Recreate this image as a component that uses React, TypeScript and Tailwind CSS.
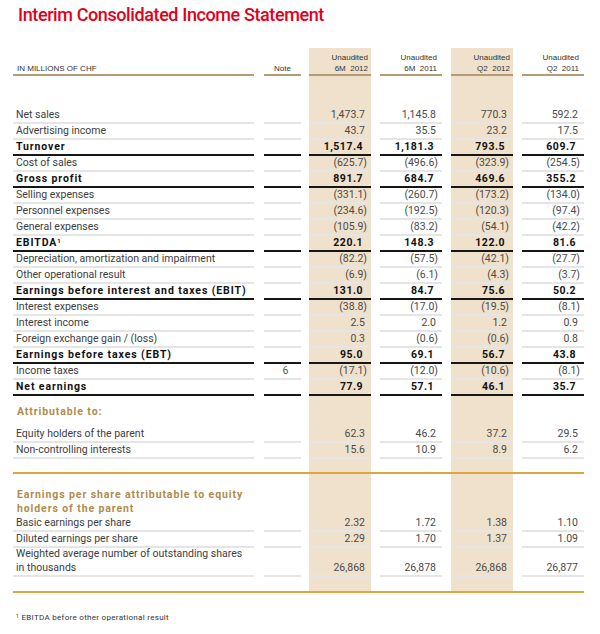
const band = 'bg-[#f0e1cc]'

type Kind = 'normal' | 'bold'

const rows: [string, string, string[], Kind][] = [
  ['Net sales', '', ['1,473.7', '1,145.8', '770.3', '592.2'], 'normal'],
  ['Advertising income', '', ['43.7', '35.5', '23.2', '17.5'], 'normal'],
  ['Turnover', '', ['1,517.4', '1,181.3', '793.5', '609.7'], 'bold'],
  ['Cost of sales', '', ['(625.7)', '(496.6)', '(323.9)', '(254.5)'], 'normal'],
  ['Gross profit', '', ['891.7', '684.7', '469.6', '355.2'], 'bold'],
  ['Selling expenses', '', ['(331.1)', '(260.7)', '(173.2)', '(134.0)'], 'normal'],
  ['Personnel expenses', '', ['(234.6)', '(192.5)', '(120.3)', '(97.4)'], 'normal'],
  ['General expenses', '', ['(105.9)', '(83.2)', '(54.1)', '(42.2)'], 'normal'],
  ['EBITDA', '', ['220.1', '148.3', '122.0', '81.6'], 'bold'],
  ['Depreciation, amortization and impairment', '', ['(82.2)', '(57.5)', '(42.1)', '(27.7)'], 'normal'],
  ['Other operational result', '', ['(6.9)', '(6.1)', '(4.3)', '(3.7)'], 'normal'],
  ['Earnings before interest and taxes (EBIT)', '', ['131.0', '84.7', '75.6', '50.2'], 'bold'],
  ['Interest expenses', '', ['(38.8)', '(17.0)', '(19.5)', '(8.1)'], 'normal'],
  ['Interest income', '', ['2.5', '2.0', '1.2', '0.9'], 'normal'],
  ['Foreign exchange gain / (loss)', '', ['0.3', '(0.6)', '(0.6)', '0.8'], 'normal'],
  ['Earnings before taxes (EBT)', '', ['95.0', '69.1', '56.7', '43.8'], 'bold'],
  ['Income taxes', '6', ['(17.1)', '(12.0)', '(10.6)', '(8.1)'], 'normal'],
  ['Net earnings', '', ['77.9', '57.1', '46.1', '35.7'], 'bold'],
]

const widths = ['w-[241px]', 'w-[37px]', 'w-[62px]', 'w-[62px]', 'w-[62px]', 'w-[62px]']
const gaps = ['', 'ml-[10px]', 'ml-[8px]', 'ml-[9px]', 'ml-[9px]', 'ml-[9px]']
const justify = ['justify-start pl-[3px]', 'justify-center', 'justify-end', 'justify-end', 'justify-end', 'justify-end']

// one row of the six columns; line is the colour class of the rule under each cell
function Skeleton({
  cells,
  line,
  h,
  align = 'items-center',
}: {
  cells: React.ReactNode[]
  line?: string
  h: string
  align?: string
}) {
  return (
    <div className="flex">
      {cells.map((c, i) => (
        <div key={i} className={`${widths[i]} ${gaps[i]} ${i === 2 || i === 4 ? band : ''} flex flex-col`}>
          <div className={`${h} flex ${align} ${justify[i]}`}>{c}</div>
          {line && <div className={`h-[2px] ${line}`} />}
        </div>
      ))}
    </div>
  )
}

function Blank({ h }: { h: string }) {
  return <Skeleton cells={['', '', '', '', '', '']} h={h} />
}

function Value({ v, bold }: { v: string; bold: boolean }) {
  const paren = v.startsWith('(')
  const pr = bold ? 'pr-[8px]' : paren ? 'pr-[4px]' : 'pr-[6px]'
  return (
    <span className={`${pr} ${bold ? 'font-bold tracking-[0.5px] text-[#111]' : 'text-[#4a4a4a]'} whitespace-nowrap`}>
      {v}
    </span>
  )
}

function Row({ label, note, values, kind }: { label: React.ReactNode; note: string; values: string[]; kind: Kind }) {
  const bold = kind === 'bold'
  return (
    <Skeleton
      h="h-[14px]"
      line={bold ? 'bg-[#161616]' : 'bg-[#e5e5e5]'}
      cells={[
        <span className={bold ? 'font-bold tracking-[0.9px] text-[#111]' : 'text-[#3d3d3d]'}>{label}</span>,
        <span className="text-[#555] pl-[6px]">{note}</span>,
        ...values.map((v) => <Value v={v} bold={bold} />),
      ]}
    />
  )
}

export default function App() {
  return (
    <div className="w-[600px] h-[634px] bg-white" style={{ fontFamily: 'Roboto, "Liberation Sans", sans-serif' }}>
      <div className="h-[48px] pt-[3px] pl-[18px]">
        <h1 className="text-[18px] leading-[24px] font-medium text-[#e2001a] tracking-[-0.4px]">
          Interim Consolidated Income Statement
        </h1>
      </div>
      <div className="pl-[13px] text-[10.5px] leading-[14px]">
        <div style={{ fontFamily: '"Liberation Sans", Arial, sans-serif' }} className="text-[8px] leading-[11px] text-[#333]">
          <Skeleton
            h="h-[26px]"
            align="items-end"
            line="bg-[#b59c77]"
            cells={[
              <span className="pl-[1px]">IN MILLIONS OF CHF</span>,
              <span>Note</span>,
              <span className="text-right pr-[3px]">Unaudited<br />6M&nbsp; 2012</span>,
              <span className="text-right pr-[5px]">Unaudited<br />6M&nbsp; 2011</span>,
              <span className="text-right pr-[3px]">Unaudited<br />Q2&nbsp; 2012</span>,
              <span className="text-right pr-[5px]">Unaudited<br />Q2&nbsp; 2011</span>,
            ]}
          />
        </div>
        <Blank h="h-[32px]" />
        {rows.map(([label, note, values, kind]) => (
          <Row
            key={label}
            label={label === 'EBITDA' ? <>EBITDA<sup className="text-[6px]">1</sup></> : label}
            note={note}
            values={values}
            kind={kind}
          />
        ))}
        <Skeleton
          h="h-[31px]"
          cells={[
            <span className="font-bold tracking-[0.9px] text-[#b08c4c] pl-[1px]">Attributable to:</span>,
            '', '', '', '', '',
          ]}
        />
        <Row label="Equity holders of the parent" note="" values={['62.3', '46.2', '37.2', '29.5']} kind="normal" />
        <Row label="Non-controlling interests" note="" values={['15.6', '10.9', '8.9', '6.2']} kind="normal" />
        <Blank h="h-[13px]" />
        <div className="w-[571px] h-[2px] bg-[#dba73e]" />
        <Skeleton
          h="h-[42px]"
          align="items-end"
          cells={[
            <span className="font-bold tracking-[0.9px] text-[#b08c4c] pl-[1px]">
              Earnings per share attributable to equity
              <br />
              holders of the parent
            </span>,
            '', '', '', '', '',
          ]}
        />
        <Row label="Basic earnings per share" note="" values={['2.32', '1.72', '1.38', '1.10']} kind="normal" />
        <Row label="Diluted earnings per share" note="" values={['2.29', '1.70', '1.37', '1.09']} kind="normal" />
        <Skeleton
          h="h-[27px]"
          align="items-end"
          line="bg-[#e5e5e5]"
          cells={[
            <span className="text-[#3d3d3d]">
              Weighted average number of outstanding shares
              <br />
              in thousands
            </span>,
            '',
            ...['26,868', '26,878', '26,868', '26,877'].map((v) => <Value v={v} bold={false} />),
          ]}
        />
        <Blank h="h-[14px]" />
        <div className="w-[571px] h-[2px] bg-[#dba73e]" />
        <div className="pt-[20px] pl-[3px] text-[8px] leading-[10px] tracking-[0.3px] text-[#333]">
          <sup className="text-[5px]">1</sup> EBITDA before other operational result
        </div>
      </div>
    </div>
  )
}
